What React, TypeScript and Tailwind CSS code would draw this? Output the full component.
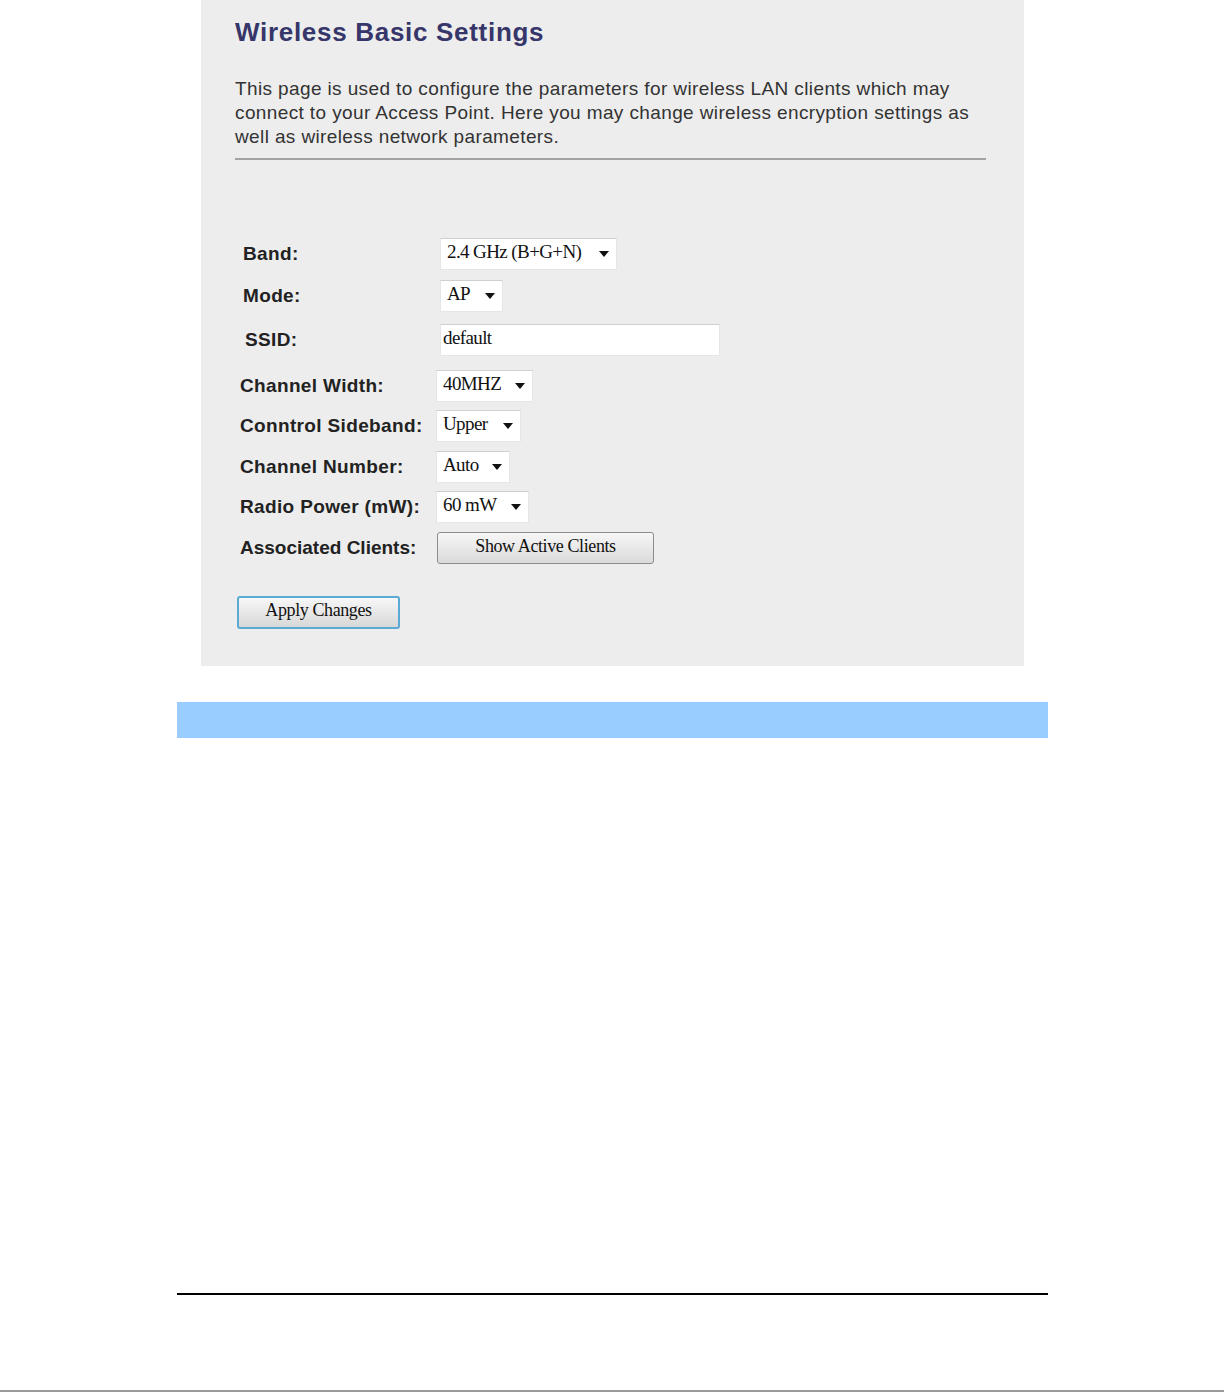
import React from "react";

// Router admin page: "Wireless Basic Settings" captured as a manual figure.

function Arrow() {
  return (
    <svg width="10" height="6" viewBox="0 0 10 6" aria-hidden className="shrink-0">
      <path d="M0 0h10L5 6z" fill="#111" />
    </svg>
  );
}

function Select({ value, width }: { value: string; width: string }) {
  return (
    <div
      className={`${width} flex h-[32px] items-center justify-between border border-[#e6e6e6] border-t-[#cfcfcf] bg-white pl-[6px] pr-[7px] font-['Liberation_Serif',serif] text-[19px] tracking-[-0.6px] text-[#111]`}
    >
      <span className="-mt-[4px]">{value}</span>
      <Arrow />
    </div>
  );
}

function Label({ children, className = "" }: { children: React.ReactNode; className?: string }) {
  return (
    <div
      className={`shrink-0 font-['Liberation_Sans',Arial,sans-serif] text-[19px] font-bold tracking-[0.35px] text-[#222] ${className}`}
    >
      {children}
    </div>
  );
}

const TOP_ROWS = [
  { label: "Band:", mt: "mt-0", control: <Select value="2.4 GHz (B+G+N)" width="w-[177px]" /> },
  { label: "Mode:", mt: "mt-[10px]", control: <Select value="AP" width="w-[63px]" /> },
];

const BOTTOM_ROWS = [
  { label: "Channel Width:", mt: "mt-[14px]", control: <Select value="40MHZ" width="w-[97px]" /> },
  { label: "Conntrol Sideband:", mt: "mt-[8px]", control: <Select value="Upper" width="w-[85px]" /> },
  { label: "Channel Number:", mt: "mt-[9px]", control: <Select value="Auto" width="w-[74px]" /> },
  { label: "Radio Power (mW):", mt: "mt-[8px]", control: <Select value="60 mW" width="w-[93px]" /> },
];

export default function App() {
  return (
    <div className="flex h-[1392px] w-[1224px] flex-col bg-white">
      <div className="ml-[201px] h-[666px] w-[823px] shrink-0 bg-[#ededed] pl-[34px] pr-[38px] pt-[17px]">
        <h1 className="font-['Liberation_Sans',Arial,sans-serif] text-[26px] font-bold leading-[30px] tracking-[0.7px] text-[#36366a]">
          Wireless Basic Settings
        </h1>
        <p className="mt-[30px] font-['Liberation_Sans',Arial,sans-serif] text-[19px] leading-[24px] tracking-[0.38px] text-[#333]">
          This page is used to configure the parameters for wireless LAN clients which may
          <br />
          connect to your Access Point. Here you may change wireless encryption settings as
          <br />
          well as wireless network parameters.
        </p>
        <div className="mt-[9px] h-[2px] bg-[#a3a3a3]" />

        <div className="ml-[8px] mt-[78px] flex flex-col">
          {TOP_ROWS.map((r) => (
            <div key={r.label} className={`${r.mt} flex h-[32px] items-center`}>
              <Label className="w-[197px]">{r.label}</Label>
              {r.control}
            </div>
          ))}
          <div className="mt-[12px] flex h-[32px] items-center">
            <Label className="w-[197px] pl-[2px]">SSID:</Label>
            <div className="flex h-[32px] w-[280px] items-center border border-[#e6e6e6] border-t-[#cfcfcf] bg-white pl-[2px] font-['Liberation_Serif',serif] text-[19px] tracking-[-0.6px] text-[#111]">
              <span className="-mt-[4px]">default</span>
            </div>
          </div>
        </div>

        <div className="ml-[5px] flex flex-col">
          {BOTTOM_ROWS.map((r) => (
            <div key={r.label} className={`${r.mt} flex h-[32px] items-center`}>
              <Label className="w-[196px]">{r.label}</Label>
              {r.control}
            </div>
          ))}
          <div className="mt-[9px] flex h-[32px] items-center">
            <Label className="w-[197px] tracking-[0px]">Associated Clients:</Label>
            <button className="flex h-[32px] w-[217px] items-center justify-center rounded-[3px] border border-[#8c8c8c] bg-gradient-to-b from-[#f7f7f7] to-[#dadada] font-['Liberation_Serif',serif] text-[18px] tracking-[-0.4px] text-[#111]">
              <span className="-mt-[4px]">Show Active Clients</span>
            </button>
          </div>
        </div>

        <button className="ml-[2px] mt-[32px] flex h-[33px] w-[163px] items-center justify-center rounded-[3px] border-2 border-[#5aaad4] bg-gradient-to-b from-[#f7f7f7] to-[#d8d8d8] font-['Liberation_Serif',serif] text-[18px] tracking-[-0.4px] text-[#111]">
          <span className="-mt-[4px]">Apply Changes</span>
        </button>
      </div>

      <div className="ml-[177px] mt-[36px] h-[36px] w-[871px] shrink-0 bg-[#99ccff]" />

      <div className="ml-[177px] mt-[555px] h-[2px] w-[871px] shrink-0 bg-black" />

      <div className="mt-auto h-[2px] w-full shrink-0 bg-[#9a9a9a]" />
    </div>
  );
}
